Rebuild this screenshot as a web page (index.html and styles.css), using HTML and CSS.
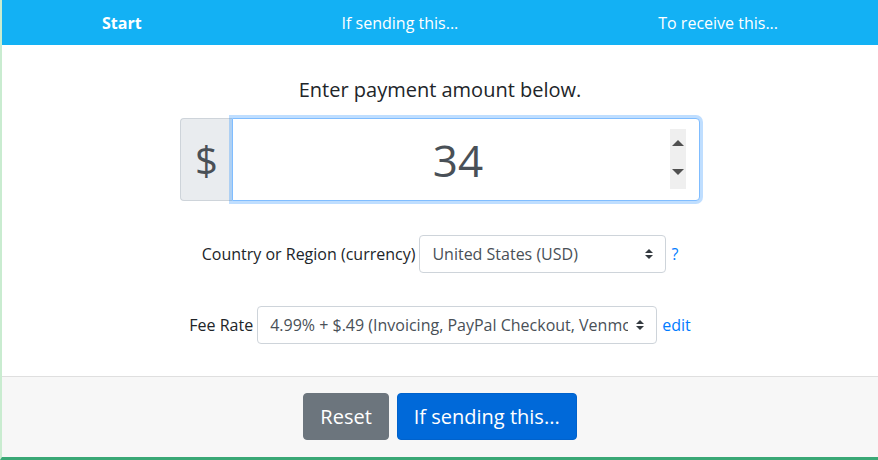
FILE: index.html
```html
<!DOCTYPE html>
<html lang="en">
<head>
<meta charset="utf-8">
<title>Fee Calculator</title>
<link rel="stylesheet" href="styles.css">
</head>
<body>
<div class="page">
  <header class="steps">
    <span class="step active">Start</span>
    <span class="step">If sending this...</span>
    <span class="step">To receive this...</span>
  </header>
  <main class="content">
    <p class="prompt">Enter payment amount below.</p>
    <div class="amount-group">
      <span class="prefix">$</span>
      <div class="amount-field">
        <input class="amount-input" type="text" value="34">
        <span class="spinner">
          <svg width="16" height="60" viewBox="0 0 16 60">
            <rect x="0" y="0" width="16" height="60" fill="#efefef"/>
            <path d="M2 17 L8 11 L14 17 Z" fill="#505050"/>
            <path d="M2 40 L14 40 L8 46 Z" fill="#505050"/>
          </svg>
        </span>
      </div>
    </div>
    <div class="field-row country-row">
      <label class="field-label">Country or Region (currency)</label>
      <div class="select country-select">
        <span class="select-text">United States (USD)</span>
        <svg class="select-arrow" width="8" height="10" viewBox="0 0 8 10"><path d="M0 4 L4 0 L8 4 Z M0 6 L8 6 L4 10 Z" fill="#343a40"/></svg>
      </div>
      <a class="link">?</a>
    </div>
    <div class="field-row fee-row">
      <label class="field-label">Fee Rate</label>
      <div class="select fee-select">
        <span class="select-text">4.99% + $.49 (Invoicing, PayPal Checkout, Venmo)</span>
        <svg class="select-arrow" width="8" height="10" viewBox="0 0 8 10"><path d="M0 4 L4 0 L8 4 Z M0 6 L8 6 L4 10 Z" fill="#343a40"/></svg>
      </div>
      <a class="link">edit</a>
    </div>
  </main>
  <footer class="actions">
    <button class="btn btn-secondary">Reset</button>
    <button class="btn btn-primary">If sending this...</button>
  </footer>
</div>
</body>
</html>
```
FILE: styles.css
```css
* { box-sizing: border-box; }
html, body { margin: 0; padding: 0; }
body {
  font-family: "Open Sans", "Liberation Sans", sans-serif;
  color: #212529;
  background: #fff;
  width: 878px;
  height: 460px;
  overflow: hidden;
}
.page {
  height: 460px;
  border-left: 2px solid #c9ecd0;
  border-bottom: 3px solid #3aa876;
  display: flex;
  flex-direction: column;
}
.steps {
  height: 45px;
  background: #13b1f4;
  color: #fff;
  display: flex;
  justify-content: space-around;
  align-items: center;
  font-size: 16px;
  flex-shrink: 0;
}
.step.active { font-weight: 700; }
.content {
  flex: 1;
  display: flex;
  flex-direction: column;
  align-items: center;
  padding-top: 30px;
}
.prompt {
  margin: 0;
  font-size: 20px;
  line-height: 30px;
}
.amount-group {
  margin-top: 13px;
  display: flex;
  width: 520px;
  height: 83px;
}
.prefix {
  width: 52px;
  display: flex;
  align-items: center;
  justify-content: center;
  background: #e9ecef;
  border: 1px solid #ced4da;
  border-right: none;
  border-radius: 4px 0 0 4px;
  color: #495057;
  font-size: 40px;
}
.amount-field {
  position: relative;
  flex: 1;
  display: flex;
}
.amount-input {
  width: 100%;
  height: 100%;
  border: 1px solid #80bdff;
  border-radius: 0 4px 4px 0;
  box-shadow: 0 0 0 3px rgba(0, 123, 255, 0.25);
  outline: none;
  font-family: inherit;
  font-size: 44px;
  color: #495057;
  text-align: center;
  padding: 0 34px 0 18px;
}
.spinner {
  position: absolute;
  right: 14px;
  top: 11px;
  display: block;
  line-height: 0;
}
.field-row {
  display: flex;
  align-items: center;
  font-size: 16px;
}
.country-row { margin-top: 34px; }
.fee-row { margin-top: 33px; }
.field-label { margin-right: 4px; }
.select {
  height: 38px;
  border: 1px solid #ced4da;
  border-radius: 4px;
  display: flex;
  align-items: center;
  padding: 0 12px;
  color: #495057;
  background: #fff;
}
.select-text {
  flex: 1;
  white-space: nowrap;
  overflow: hidden;
}
.select-arrow { flex-shrink: 0; margin-left: 8px; }
.country-select { width: 247px; }
.fee-select { width: 400px; }
.link {
  color: #007bff;
  margin-left: 5px;
}
.actions {
  height: 81px;
  flex-shrink: 0;
  background: #f7f7f7;
  border-top: 1px solid #dfdfdf;
  display: flex;
  justify-content: center;
  align-items: flex-start;
  gap: 8px;
  padding-top: 16px;
}
.btn {
  font-family: inherit;
  font-size: 20px;
  line-height: 29px;
  padding: 8px 16px;
  border-radius: 4px;
  border: 1px solid transparent;
  color: #fff;
}
.btn-secondary { background: #6c757d; border-color: #6c757d; }
.btn-primary { background: #0069d9; border-color: #0062cc; }
```
